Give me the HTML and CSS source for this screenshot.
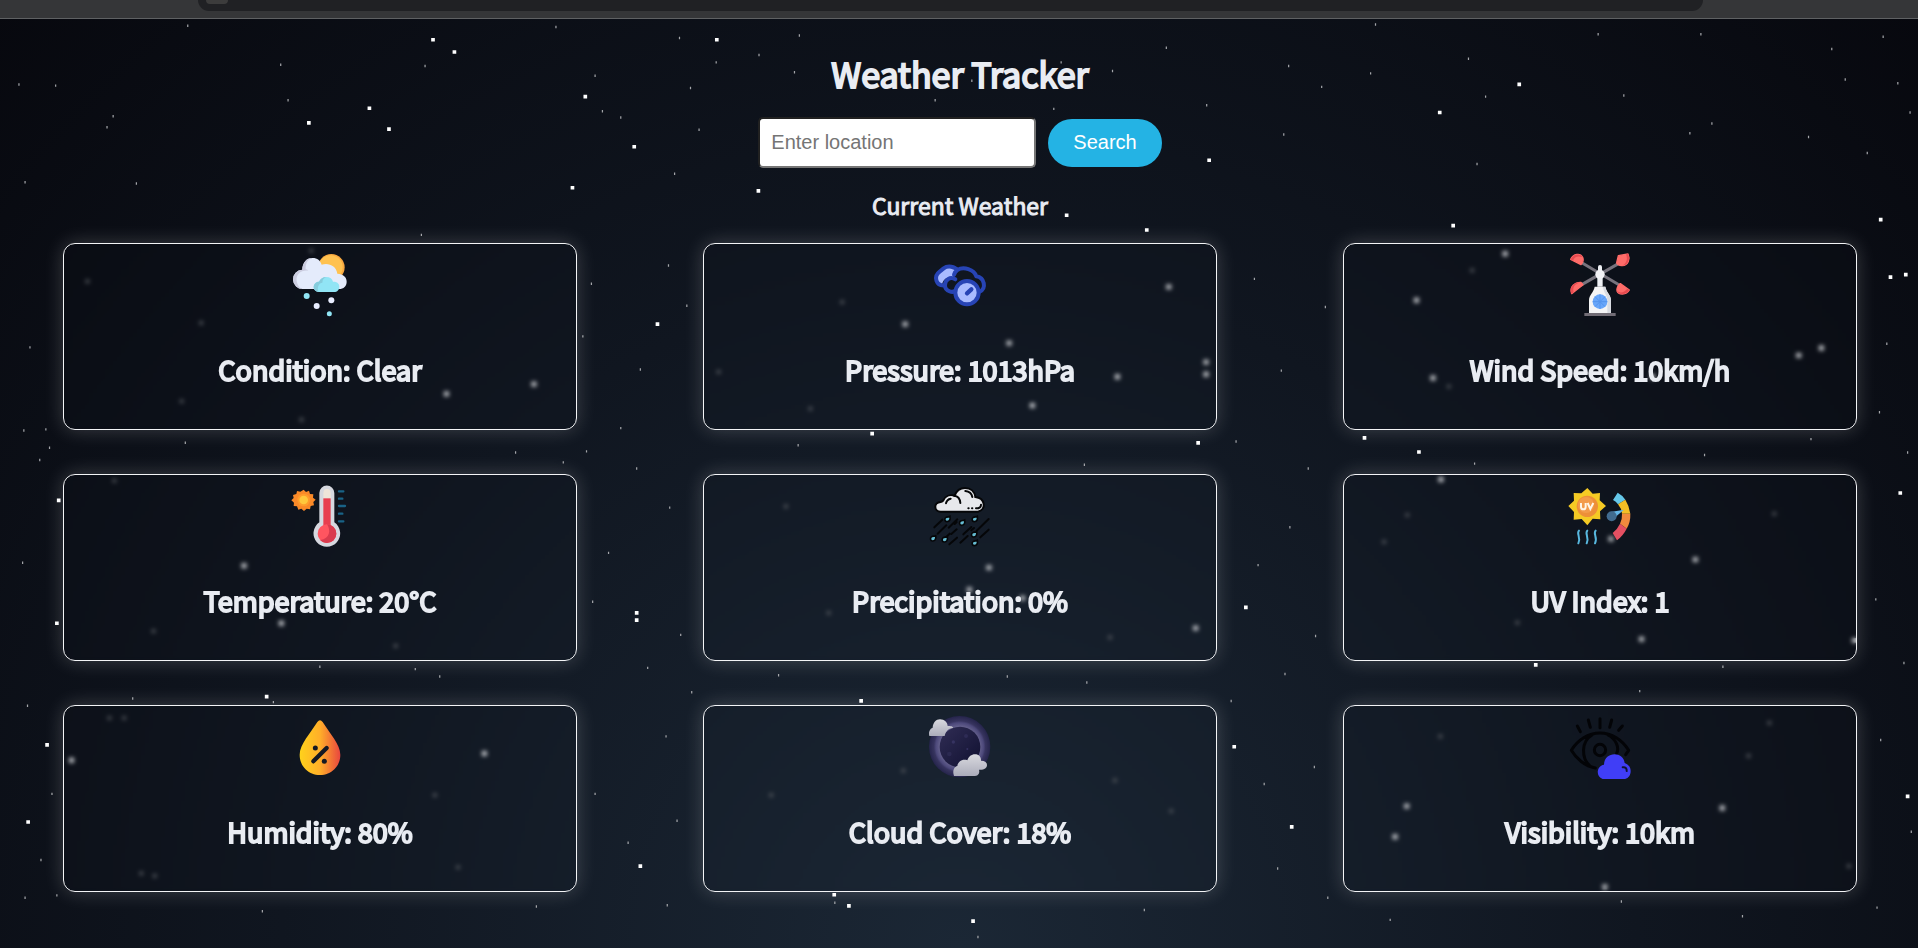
FILE: index.html
```
<!DOCTYPE html>
<html lang="en">
<head>
<meta charset="utf-8">
<title>Weather Tracker</title>
<link rel="stylesheet" href="styles.css">
</head>
<body>
<svg class="stars" viewBox="0 0 1568 775" preserveAspectRatio="xMidYMid slice" aria-hidden="true">
<path class="star-lg" d="M352.500 32.500h3M370 42.500h3M584.500 32.500h3M477 79h3M300.500 88.500h3M251 100.500h3M316.500 105.500h3M517 120h3M466.500 153.500h3M618.500 156h3M870.500 176h3M936 188h3M987 131h3M1175.500 92h3M1240.500 69h3M1186.500 184.500h3M1536 179.500h3M1544 226.500h3M1556.500 224.500h3M536 265h3M711.500 354.500h3M978 362h3M1114 358h3M1158.500 369.500h3M1552 403h3M46.500 409h3M45 509.500h3M519 501h3M519 507h3M1017 496.500h3M1254 543.500h3M216.500 569.500h3M702.500 573h3M37 609h3M21.500 672h3M522 708h3M1007.500 610.500h3M1054.500 676h3M1558 651h3M680.500 731.500h3M692.500 740.500h3M794 753h3"/>
<path class="star-card" d="M363 322h4M434.500 314h4M953.500 234.500h4M738 265h4M823 280.500h4M911.500 308h4M984 296h4M984 306h4M842 331.500h4M1228.500 207.500h4M1156 245.500h4M1487 284.500h4M1468.500 290.500h4M1349 308h4M1169.500 309h4M1176 392h4M1384 457.500h4M1340 522.500h4M1514 523.500h4M806.500 464h4M790.500 482h4M834 489h4M975.500 513.500h4M197.500 462.500h4M228 509.500h4M394 616h4M1148 659h4M1138.500 684h4M1406 660.500h4M1310 725h4M56.500 621.500h4M1315 440.500h4"/>
<path class="star-sm" d="M45 70h1M92 95h1M20 149h1M111 150h1M15 69h1M87 104h1M229 53h1M235 82h1M153 21h1M347 54h1M555 31h1M454 22h1M486 62h1M492 91h1M507 96h1M564 72h1M585 51h1M653 29h1M551 142h1M571 106h1M649 59h1M620 45h1M764 82h1M794 66h1M986 86h1M953 39h1M909 58h1M867 51h1M861 89h1M827 57h1M1053 54h1M1049 110h1M1080 71h1M1120 60h1M1124 20h1M1200 48h1M1207 134h1M1214 79h1M1306 28h1M1327 78h1M1381 109h1M1390 28h1M1399 101h1M1478 112h1M1497 40h1M1508 65h1M1539 30h1M1551 68h1M1561 92h1M1526 125h1M24 284h1M37 351h1M40 366h1M32 376h1M19 352h1M18 460h1M22 577h1M42 649h1M33 703h1M20 734h1M46 732h1M483 232h1M476 275h1M507 350h1M523 302h1M546 217h1M561 250h1M479 369h1M520 383h1M547 415h1M497 452h1M484 492h1M556 519h1M529 546h1M565 566h1M544 602h1M486 649h1M553 671h1M513 689h1M545 740h1M1025 228h1M1083 251h1M1047 303h1M1010 361h1M1069 383h1M1054 431h1M1028 462h1M1075 520h1M1050 551h1M1006 573h1M1074 627h1M1033 641h1M1044 710h1M1085 734h1M1542 281h1M1536 337h1M1559 370h1M1533 490h1M1556 542h1M1537 605h1M1562 680h1M1534 742h1M344 192h1M214 745h1M438 741h1M339 547h1M359 553h1M108 571h1M223 574h1M261 545h1M151 362h1M421 370h1M460 378h1M636 552h1M823 553h1M888 558h1M935 744h1M799 766h1M1136 752h1M1325 737h1M1424 749h1M1340 565h1M1408 545h1M1205 379h1M1393 372h1M1480 359h1M682 738h1M886 380h1M652 364h1"/>
<path class="star-dim" d="M70 230h3M163 264h3M253 205h3M147 328h3M245 343h3M586 304h3M687 247h3M661 334h3M1183 316h3M1202 221h3M92 393h3M124 516h3M322 528h3M641 414h3M676 501h3M906 521h3M1130 443h3M1149 421h3M1449 420h3M1239 509h3M88 587h3M100 587h3M114 714h3M125 716h3M354 650h3M373 709h3M629 650h3M737 630h3M910 638h3M956 663h3M1176 602h3M1445 591h3M1428 618h3M1510 708h3"/>
</svg>
<div class="browser-bar"><div class="address"><span class="address-dot"></span></div></div>
<main class="page">
<h1 class="title">Weather Tracker</h1>
<form class="search">
<input class="location" type="text" placeholder="Enter location" aria-label="Location">
<button class="search-btn" type="button">Search</button>
</form>
<h2 class="subtitle">Current Weather</h2>
<section class="grid">
<article class="card">
<svg class="icon" viewBox="54 38 192 192" aria-hidden="true">
<circle cx="184" cy="81" r="40" fill="#f9a940"/><circle cx="182" cy="81" r="36" fill="#ffc250"/>
<path d="M99 146a29 29 0 0 1-2-58c0-21 13-35 31-35 14 0 23 8 27 20 20-7 44 3 47 27 18 1 28 10 28 24 0 13-9 22-23 22z" fill="#e4ebfb"/>
<path d="M99 146a29 29 0 0 1-2-58c0-21 13-35 29-35-14 5-20 17-19 34 4 1 7 2 8 4-24-2-38 13-35 31 2 13 10 23 19 24z" fill="#cccde0"/>
<path d="M146 155c-8 0-15-7-15-15 0-10 8-16 16-16 4-9 12-14 22-14 11 0 18 6 20 14 12-1 19 6 19 15s-6 16-16 16z" fill="#91e5f5"/>
<path d="M146 155c-8 0-15-7-15-15 0-10 8-16 16-16 4-9 12-14 22-14-9 4-11 9-12 17-12 1-17 17-11 28z" fill="#86ccdc"/>
<circle cx="110" cy="167" r="9" fill="#91e5f5"/><circle cx="184" cy="180" r="9" fill="#e8edff"/><circle cx="140" cy="197" r="9" fill="#e8edff"/><circle cx="178" cy="220" r="7.500" fill="#91e5f5"/>
</svg>
<p class="reading">Condition: Clear</p></article>
<article class="card">
<svg class="icon" viewBox="54 38 192 192" aria-hidden="true">
<path d="M96 134c-18-1-26-18-14-34 5-8 12-8 17-14 11-12 32-12 41 0l-11 28c-20-5-30 4-33 20z" fill="#a9bbff"/>
<path d="M142 147c-12 14-37 7-37-12-28 3-35-27-16-41 6-4 8-7 12-10 13-10 34-5 41 5 19-11 50-2 57 19 25 4 31 36 10 46M105 135c0-18 16-27 31-18M142 90c-6 3-8 8-10 13" fill="none" stroke="#2744b5" stroke-width="12" stroke-linecap="round" stroke-linejoin="round"/>
<circle cx="171" cy="157" r="35" fill="#a9bbff" stroke="#2744b5" stroke-width="12"/>
<path d="M171 159l13-12" stroke="#2744b5" stroke-width="13" stroke-linecap="round"/>
</svg>
<p class="reading">Pressure: 1013hPa</p></article>
<article class="card">
<svg class="icon" viewBox="54 38 192 192" aria-hidden="true">
<path d="M88 63l125 74M212 66l-126 72" stroke="#77737d" stroke-width="9"/>
<path d="M62 57c8-17 29-20 36-6 3 6 0 16-5 22zM205 46l29-5c7 14 1 34-17 35-10 1-17-5-17-9zM99 133l-6-7c-17-1-36 13-28 34zM211 130l27 19c-9 16-33 15-37 3-2-7 3-18 10-22z" fill="#ff6c69" stroke="#ff6c69" stroke-width="4" stroke-linejoin="round"/>
<path d="M62 57c8-17 29-20 36-6-14-6-25-2-29 10zM234 41c7 14 1 34-17 35 13-8 17-19 11-34zM92 126c-17-1-36 13-28 34l7-4c-4-14 3-26 21-30zM238 149c-9 16-33 15-37 3 10 8 22 4 31-7z" fill="#e94a50"/>
<path d="M144 91V80q0-6 6-6t6 6v11zM142 112h16v27h-16z" fill="#eef0f4"/><circle cx="150" cy="102" r="14" fill="#f2f2f5"/>
<path d="M134 139h32c3 17 17 25 17 41v38h-66v-38c0-16 14-24 17-41z" fill="#f4f4f5"/><path d="M166 139c3 17 17 25 17 41v38h-11v-38c0-16-12-24-13-41z" fill="#d9dce2"/>
<circle cx="150" cy="184" r="22" fill="#68a6fa"/><path d="M150 162v44M128 184h44M135 169l30 30M165 169l-30 30" stroke="#5494ed" stroke-width="3"/>
<path d="M103 218h94v9h-94z" fill="#716c75"/>
</svg>
<p class="reading">Wind Speed: 10km/h</p></article>
<article class="card">
<svg class="icon" viewBox="54 41 192 192" aria-hidden="true">
<path d="M101 58l7 7 9-4 3 10 10 1-1 10 8 6-7 7 2 10-10 2-2 10-10-2-8 7-8-7-9 3-4-10-10-1 1-10-8-7 7-7-2-9 10-3 2-9 10 2z" fill="#fa8a28"/><circle cx="101" cy="89" r="19" fill="#ff9c2b"/><circle cx="101" cy="89" r="13" fill="#ffc83c"/>
<path d="M148 68a22 22 0 0 1 45 0v88a40 40 0 1 1-45 0z" fill="#d6d8df"/>
<path d="M160 69q0-13 11-13t11 13v17h-22z" fill="#eee5d9"/><path d="M160 84h22v90h-22z" fill="#e83e4f"/>
<circle cx="171" cy="190" r="28" fill="#ff5560"/><path d="M171 162a28 28 0 0 1 0 56q-13 0-20-9c29-3 32-30 20-47z" fill="#d93b4e"/>
<path d="M207 63h13M207 85h10M207 107h18M207 130h10M207 153h13" stroke="#196286" stroke-width="7" stroke-linecap="round"/>
</svg>
<p class="reading">Temperature: 20°C</p></article>
<article class="card">
<svg class="icon" viewBox="54 41 192 192" aria-hidden="true">
<path d="M92 124c-20 0-23-28 0-29 4-1 6-2 8-5 6-13 20-18 34-14 5-14 16-23 31-23 17 0 29 11 31 27 29 3 35 37 8 44z" fill="#e7e8ec" stroke="#050608" stroke-width="6"/>
<path d="M108 99c2-8 7-13 14-14M132 76c12 1 18 9 19 22M166 62c12 1 19 8 21 18M175 114h1M186 114h1M198 114c9 0 15-4 15-11" fill="none" stroke="#050608" stroke-width="6" stroke-linecap="round"/>
<path d="M73 171l24-23M83 190l26-25M116 172l26-25M134 161l6-6M103 205l16-15M118 222l23-20M124 191l16-14M151 217l22-20M160 192l24-22M184 180l8-7M200 181l36-35M211 201l25-23" stroke="#050608" stroke-width="6" stroke-linecap="round"/>
<g fill="#66bdd3" stroke="#050608" stroke-width="5"><path id="drop" d="M120 138c2 10-2 16-9 16-7 0-9-9-3-13 3-2 8-1 12-3z"/><use href="#drop" x="44" y="11"/><use href="#drop" x="82"/><use href="#drop" x="-43" y="58"/><use href="#drop" x="-8" y="61"/><use href="#drop" x="80" y="46"/><use href="#drop" x="82" y="72"/></g>
</svg>
<p class="reading">Precipitation: 0%</p></article>
<article class="card">
<svg class="icon" viewBox="54 41 192 192" aria-hidden="true">
<path d="M112 53l16 17 22-2-1 22 19 17-18 16 1 24-23-2-16 20-17-19-24 2 1-23-17-18 17-16-1-23 23 1z" fill="#f5ca24"/><circle cx="112" cy="108" r="32" fill="#ed8f38"/><circle cx="108" cy="104" r="24" fill="#f39b4a"/>
<path d="M93 98v11q0 8 7 8t7-8v-11M113 98l8 18 9-18" fill="none" stroke="#fff6e7" stroke-width="6"/>
<path d="M87 181c-9 10 7 19-2 38M112 181c-9 10 7 19-2 38M137 181c-9 10 7 19-2 38" fill="none" stroke="#58b8df" stroke-width="6" stroke-linecap="round"/>
<path d="M203 67q15 8 23 21l-22 14q-6-9-15-13z" fill="#65c7e9"/><path d="M226 88q12 19 15 42h-25q-1-15-12-28z" fill="#f4be25"/><path d="M241 130q1 25-11 45l-20-15q7-13 6-30z" fill="#f18a3d"/><path d="M230 175q-10 20-29 35l-13-22q14-11 22-28z" fill="#e55062"/>
<path d="M222 118l-40 7 6 22z" fill="#64b6e6"/><circle cx="185" cy="138" r="15" fill="#416b8e"/>
</svg>
<p class="reading">UV Index: 1</p></article>
<article class="card">
<svg class="icon" viewBox="54 41 192 192" aria-hidden="true">
<defs><linearGradient id="amber"><stop stop-color="#ffd21b"/><stop offset=".5" stop-color="#ffae29"/><stop offset="1" stop-color="#e9463f"/></linearGradient></defs>
<path d="M142 62q8-10 16 0c20 32 53 68 53 98 0 35-27 61-61 61s-61-26-61-61c0-30 33-66 53-98z" fill="url(#amber)"/>
<path d="M130 180l40-40" stroke="#151923" stroke-width="13" stroke-linecap="round"/><circle cx="136" cy="140" r="7.500" fill="#151923"/><circle cx="163" cy="180" r="7.500" fill="#151923"/>
</svg>
<p class="reading">Humidity: 80%</p></article>
<article class="card">
<svg class="icon" viewBox="54 41 192 192" aria-hidden="true">
<defs><radialGradient id="halo"><stop offset=".6" stop-color="#6d6993"/><stop offset=".78" stop-color="#4c487a"/><stop offset=".84" stop-color="#37345f"/><stop offset="1" stop-color="#25244b"/></radialGradient><linearGradient id="night" x2="1" y2="1"><stop stop-color="#302d55"/><stop offset="1" stop-color="#101030"/></linearGradient><linearGradient id="cloud" y2="1" x2="0"><stop stop-color="#d9d9df"/><stop offset="1" stop-color="#abacba"/></linearGradient></defs>
<circle cx="149" cy="136" r="92" fill="url(#halo)"/><circle cx="150" cy="137" r="61" fill="url(#night)"/>
<circle cx="130" cy="122" r="5" fill="#363361"/><circle cx="168" cy="104" r="6" fill="#2e2b55"/><circle cx="118" cy="158" r="7" fill="#2b2951"/><circle cx="172" cy="143" r="3" fill="#343160"/>
<path d="M58 104c-3-13 2-22 10-25 1-15 10-25 22-25 14 0 22 9 23 20 9 0 17 1 16 6-15 1-22 12-25 24z" fill="url(#cloud)"/>
<path d="M132 224c-6-18 2-28 10-30 2-13 15-22 30-17 4-11 12-18 23-18 12 0 18 8 18 19 12 0 18 5 18 13 0 10-9 15-24 14 3 10-2 18-12 19z" fill="url(#cloud)"/>
</svg>
<p class="reading">Cloud Cover: 18%</p></article>
<article class="card">
<svg class="icon" viewBox="54 41 192 192" aria-hidden="true">
<g fill="none" stroke="#030407" stroke-width="9" stroke-linecap="round" stroke-linejoin="round"><path d="M136 200c-31-5-58-29-72-53 19-31 51-52 86-52s67 21 86 52l-9 13M82 74l9 17M115 56l6 22M150 52v27M185 56l-6 22M217 74l-11 13M126 101c-32 19-34 69-5 94M174 101c26 13 34 40 26 55"/><circle cx="150" cy="146" r="17"/></g>
<path d="M165 234c-28 0-29-40-3-44 1-41 59-40 62-5 13 5 18 14 18 24 0 15-9 25-25 25z" fill="#403ef6"/><path d="M218 198c8-2 13 4 12 11" fill="none" stroke="#101335" stroke-width="6" stroke-linecap="round"/>
</svg>
<p class="reading">Visibility: 10km</p></article>
</section>
</main>
</body>
</html>
```
FILE: styles.css
```
* {
  box-sizing: border-box;
}

body {
  position: relative;
  margin: 0;
  min-height: 100vh;
  overflow: hidden;
  background: radial-gradient(ellipse at bottom, #1b2735 0%, #101620 50%, #07080e 100%);
  color: #e9ecf2;
  font-family: "Noto Sans CJK JP", sans-serif;
}

.stars {
  position: absolute;
  inset: 0;
  width: 100%;
  height: 100%;
}

.star-lg,
.star-card {
  stroke: #fff;
  stroke-width: 3;
}

.star-card {
  stroke: #d0d2d6;
  stroke-width: 4;
}

.star-sm {
  stroke: #a4a6aa;
  stroke-width: 2;
}

.star-dim {
  stroke: #54585e;
  stroke-width: 3;
}

.browser-bar {
  position: relative;
  height: 19px;
  padding: 0 11.200% 0 10.300%;
  border-bottom: 1px solid #5f6163;
  background: #353638;
}

.address {
  height: 11px;
  padding-left: 8px;
  overflow: hidden;
  border-radius: 0 0 16px 16px;
  background: #202124;
}

.address-dot {
  display: block;
  width: 22px;
  height: 4px;
  border-radius: 0 0 11px 11px;
  background: #3c3c3c;
}

.page {
  position: relative;
  padding: 27px 0 0 2px;
}

.title,
.subtitle,
.reading {
  font-weight: 400;
  text-align: center;
  -webkit-text-stroke: 1px currentColor;
}

.title {
  margin: 0 0 15px;
  font-size: 34px;
  line-height: 56px;
  -webkit-text-stroke-width: 2px;
}

.search {
  display: flex;
  justify-content: center;
  align-items: center;
  gap: 12px;
}

.location,
.search-btn {
  font-family: "Liberation Sans", Arial, sans-serif;
  font-size: 20px;
}

.location {
  width: 278px;
  height: 51px;
  padding: 0 11px;
  border: 2px inset #767676;
  border-radius: 5px;
  background: #fff;
}

.location::placeholder {
  color: #757575;
}

.search-btn {
  height: 48px;
  padding: 0 25px;
  border: 0;
  border-radius: 24px;
  background: #24b3e4;
  color: #fff;
}

.subtitle {
  margin: 19px 0 20px;
  font-size: 23px;
  line-height: 36px;
}

.grid {
  display: grid;
  grid-template-columns: repeat(3, 1fr);
  gap: 44px 126px;
  padding: 0 61px 56px;
}

.card {
  display: flex;
  flex-direction: column;
  align-items: center;
  min-height: 187px;
  padding: 9px 12px;
  border: 1px solid #f3f4f6;
  border-radius: 12px;
  box-shadow: 0 0 20px rgba(255, 255, 255, 0.2);
  backdrop-filter: blur(2px);
}

.icon {
  width: 64px;
  height: 64px;
}

.reading {
  margin: 32px 0 0;
  font-size: 27px;
  line-height: 42px;
  -webkit-text-stroke-width: 2px;
}
```
